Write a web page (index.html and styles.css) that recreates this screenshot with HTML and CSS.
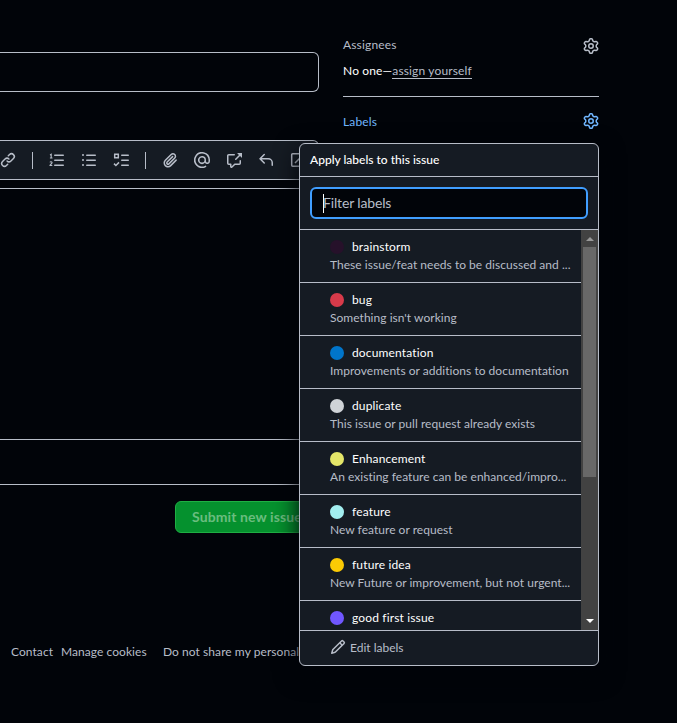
FILE: index.html
```html
<!DOCTYPE html>
<html lang="en">
<head>
<meta charset="utf-8">
<title>New issue</title>
<link rel="stylesheet" href="styles.css">
</head>
<body>
<svg class="sprite" aria-hidden="true">
  <symbol id="gear" viewBox="0 0 16 16"><path d="M8 0a8.2 8.2 0 0 1 .701.031C9.444.095 9.99.645 10.16 1.29l.288 1.107c.018.066.079.158.212.224.231.114.454.243.668.386.123.082.233.09.299.071l1.103-.303c.644-.176 1.392.021 1.82.63.27.385.506.792.704 1.218.315.675.111 1.422-.364 1.891l-.814.806c-.049.048-.098.147-.088.294.016.257.016.515 0 .772-.01.147.038.246.088.294l.814.806c.475.469.679 1.216.364 1.891a7.977 7.977 0 0 1-.704 1.217c-.428.61-1.176.807-1.82.63l-1.102-.302c-.067-.019-.177-.011-.3.071a5.909 5.909 0 0 1-.668.386c-.133.066-.194.158-.211.224l-.29 1.106c-.168.646-.715 1.196-1.458 1.26a8.006 8.006 0 0 1-1.402 0c-.743-.064-1.289-.614-1.458-1.26l-.289-1.106c-.018-.066-.079-.158-.212-.224a5.738 5.738 0 0 1-.668-.386c-.123-.082-.233-.09-.299-.071l-1.103.303c-.644.176-1.392-.021-1.82-.63a8.12 8.12 0 0 1-.704-1.218c-.315-.675-.111-1.422.363-1.891l.815-.806c.05-.048.098-.147.088-.294a6.214 6.214 0 0 1 0-.772c.01-.147-.038-.246-.088-.294l-.815-.806C.635 6.045.431 5.298.746 4.623a7.92 7.92 0 0 1 .704-1.217c.428-.61 1.176-.807 1.82-.63l1.102.302c.067.019.177.011.3-.071.214-.143.437-.272.668-.386.133-.066.194-.158.211-.224l.29-1.106C6.009.645 6.556.095 7.299.03 7.53.01 7.764 0 8 0Zm-.571 1.525c-.036.003-.108.036-.137.146l-.289 1.105c-.147.561-.549.967-.998 1.189-.173.086-.34.183-.5.29-.417.278-.97.423-1.529.27l-1.103-.303c-.109-.03-.175.016-.195.045-.22.312-.412.644-.573.99-.014.031-.021.11.059.19l.815.806c.411.406.562.957.53 1.456a4.709 4.709 0 0 0 0 .582c.032.499-.119 1.05-.53 1.456l-.815.806c-.081.08-.073.159-.059.19.162.346.353.677.573.989.02.03.085.076.195.046l1.102-.303c.56-.153 1.113-.008 1.53.27.161.107.328.204.501.29.447.222.85.629.997 1.189l.289 1.105c.029.109.101.143.137.146a6.6 6.6 0 0 0 1.142 0c.036-.003.108-.036.137-.146l.289-1.105c.147-.561.549-.967.998-1.189.173-.086.34-.183.5-.29.417-.278.97-.423 1.529-.27l1.103.303c.109.029.175-.016.195-.045.22-.313.411-.644.573-.99.014-.031.021-.11-.059-.19l-.815-.806c-.411-.406-.562-.957-.53-1.456a4.709 4.709 0 0 0 0-.582c-.032-.499.119-1.05.53-1.456l.815-.806c.081-.08.073-.159.059-.19a6.464 6.464 0 0 0-.573-.989c-.02-.03-.085-.076-.195-.046l-1.102.303c-.56.153-1.113.008-1.53-.27a4.44 4.44 0 0 0-.501-.29c-.447-.222-.85-.629-.997-1.189l-.289-1.105c-.029-.11-.101-.143-.137-.146a6.6 6.6 0 0 0-1.142 0ZM11 8a3 3 0 1 1-6 0 3 3 0 0 1 6 0ZM9.5 8a1.5 1.5 0 1 0-3.001.001A1.5 1.5 0 0 0 9.5 8Z"/></symbol>
</svg>

<div class="page">
  <main class="editor">
    <div class="title-field"></div>
    <div class="toolbar">
      <svg class="icon" viewBox="0 0 16 16"><path d="m7.775 3.275 1.25-1.25a3.5 3.5 0 1 1 4.95 4.95l-2.5 2.5a3.5 3.5 0 0 1-4.95 0 .751.751 0 0 1 .018-1.042.751.751 0 0 1 1.042-.018 1.998 1.998 0 0 0 2.83 0l2.5-2.5a2.002 2.002 0 0 0-2.83-2.83l-1.25 1.25a.751.751 0 0 1-1.042-.018.751.751 0 0 1-.018-1.042Zm-4.69 9.64a1.998 1.998 0 0 0 2.83 0l1.25-1.25a.751.751 0 0 1 1.042.018.751.751 0 0 1 .018 1.042l-1.25 1.25a3.5 3.5 0 1 1-4.95-4.95l2.5-2.5a3.5 3.5 0 0 1 4.95 0 .751.751 0 0 1-.018 1.042.751.751 0 0 1-1.042.018 1.998 1.998 0 0 0-2.83 0l-2.5 2.5a1.998 1.998 0 0 0 0 2.83Z"/></svg>
      <span class="divider"></span>
      <svg class="icon" viewBox="0 0 16 16"><path d="M5.75 2.5h8.5a.75.75 0 0 1 0 1.5h-8.5a.75.75 0 0 1 0-1.5Zm0 5h8.5a.75.75 0 0 1 0 1.5h-8.5a.75.75 0 0 1 0-1.5Zm0 5h8.5a.75.75 0 0 1 0 1.5h-8.5a.75.75 0 0 1 0-1.5Z"/><path class="line" d="M1 2.9 2.2 2.2V6M.9 6h2.6M1 10.4c.3-1 2.2-.9 2.1.3C3 11.7 1.2 12.3 1 13.5h2.3"/></svg>
      <svg class="icon" viewBox="0 0 16 16"><path d="M5.75 2.5h8.5a.75.75 0 0 1 0 1.5h-8.5a.75.75 0 0 1 0-1.5Zm0 5h8.5a.75.75 0 0 1 0 1.5h-8.5a.75.75 0 0 1 0-1.5Zm0 5h8.5a.75.75 0 0 1 0 1.5h-8.5a.75.75 0 0 1 0-1.5ZM2 14a1 1 0 1 1 0-2 1 1 0 0 1 0 2Zm1-6a1 1 0 1 1-2 0 1 1 0 0 1 2 0ZM2 4a1 1 0 1 1 0-2 1 1 0 0 1 0 2Z"/></svg>
      <svg class="icon" viewBox="0 0 16 16"><path d="M8.75 2.5h6.5a.75.75 0 0 1 0 1.5h-6.5a.75.75 0 0 1 0-1.5Zm0 5h6.5a.75.75 0 0 1 0 1.5h-6.5a.75.75 0 0 1 0-1.5Zm0 5h6.5a.75.75 0 0 1 0 1.5h-6.5a.75.75 0 0 1 0-1.5Z"/><path class="check" d="M1.7 2.2h3.6v3.6H1.7zM1 11.6l1.9 1.9L6 10.4"/></svg>
      <span class="divider"></span>
      <svg class="icon" viewBox="0 0 16 16"><path d="M12.212 3.02a1.753 1.753 0 0 0-2.478.003l-5.83 5.83a3.007 3.007 0 0 0-.88 2.127c0 .795.315 1.551.88 2.116.567.567 1.333.89 2.126.89.79 0 1.548-.321 2.116-.89l5.48-5.48a.75.75 0 0 1 1.061 1.06l-5.48 5.48a4.492 4.492 0 0 1-3.177 1.33c-1.2 0-2.345-.487-3.187-1.33a4.483 4.483 0 0 1-1.32-3.177c0-1.195.475-2.341 1.32-3.186l5.83-5.83a3.25 3.25 0 0 1 5.553 2.297c0 .863-.343 1.691-.953 2.301L7.439 12.39c-.375.377-.884.59-1.416.593a1.998 1.998 0 0 1-1.412-.593 1.992 1.992 0 0 1 0-2.828l5.48-5.48a.751.751 0 0 1 1.042.018.751.751 0 0 1 .018 1.042l-5.48 5.48a.492.492 0 0 0 0 .707.499.499 0 0 0 .352.154.51.51 0 0 0 .356-.154l5.833-5.827a1.755 1.755 0 0 0 0-2.481Z"/></svg>
      <svg class="icon" viewBox="0 0 16 16"><path d="M4.75 2.37a6.501 6.501 0 0 0 6.5 11.26.75.75 0 0 1 .75 1.298A7.999 7.999 0 0 1 .989 4.148 8 8 0 0 1 16 7.75v1.5a2.75 2.75 0 0 1-5.072 1.475 3.999 3.999 0 0 1-6.65-4.19A4 4 0 0 1 12 8v1.25a1.25 1.25 0 0 0 2.5 0V7.867a6.5 6.5 0 0 0-9.75-5.496ZM10.5 8a2.5 2.5 0 1 0-5 0 2.5 2.5 0 0 0 5 0Z"/></svg>
      <svg class="icon" viewBox="0 0 16 16"><path d="M2.75 3.5a.25.25 0 0 0-.25.25v7.5c0 .138.112.25.25.25h2a.75.75 0 0 1 .75.75v2.19l2.72-2.72a.749.749 0 0 1 .53-.22h4.5a.25.25 0 0 0 .25-.25v-2.5a.75.75 0 0 1 1.5 0v2.5A1.75 1.75 0 0 1 13.25 13H9.06l-2.573 2.573A1.458 1.458 0 0 1 4 14.543V13H2.75A1.75 1.75 0 0 1 1 11.25v-7.5C1 2.784 1.784 2 2.75 2h5.5a.75.75 0 0 1 0 1.5ZM16 1.25v4.146a.25.25 0 0 1-.427.177L14.03 4.03l-3.75 3.75a.749.749 0 0 1-1.275-.326.749.749 0 0 1 .215-.734l3.75-3.75-1.543-1.543A.25.25 0 0 1 11.604 1h4.146a.25.25 0 0 1 .25.25Z"/></svg>
      <svg class="icon" viewBox="0 0 16 16"><path d="M6.78 1.97a.75.75 0 0 1 0 1.06L3.81 6h6.44A4.75 4.75 0 0 1 15 10.75v2.5a.75.75 0 0 1-1.5 0v-2.5a3.25 3.25 0 0 0-3.25-3.25H3.81l2.97 2.97a.749.749 0 0 1-.326 1.275.749.749 0 0 1-.734-.215L1.47 7.28a.75.75 0 0 1 0-1.06l4.25-4.25a.75.75 0 0 1 1.06 0Z"/></svg>
      <svg class="icon" viewBox="0 0 16 16"><path class="box" d="M2.7 1.75h10.6a1 1 0 0 1 1 1v10.6a1 1 0 0 1-1 1H2.7a1 1 0 0 1-1-1V2.75a1 1 0 0 1 1-1ZM5 11l6-6"/></svg>
    </div>
    <div class="textarea"></div>
    <div class="attach"></div>
    <div class="submit">Submit new issue</div>
    <footer class="footer"><span class="contact">Contact</span><span class="cookies">Manage cookies</span><span class="privacy">Do not share my personal</span></footer>
  </main>

  <aside class="sidebar">
    <section class="assignees">
      <div class="heading"><span>Assignees</span><svg class="icon"><use href="#gear"/></svg></div>
      <div class="value">No one—<span class="self">assign yourself</span></div>
    </section>
    <section class="labels">
      <div class="heading active"><span>Labels</span><svg class="icon"><use href="#gear"/></svg></div>
      <div class="menu">
        <div class="menu-title"><span>Apply labels to this issue</span></div>
        <div class="filter"><div class="filter-input"><i class="caret"></i><span>Filter labels</span></div></div>
        <div class="scroller">
          <ul class="list">
            <li><div class="name"><i class="dot brainstorm"></i>brainstorm</div><p>These issue/feat needs to be discussed and ...</p></li>
            <li><div class="name"><i class="dot bug"></i>bug</div><p>Something isn't working</p></li>
            <li><div class="name"><i class="dot documentation"></i>documentation</div><p>Improvements or additions to documentation</p></li>
            <li><div class="name"><i class="dot duplicate"></i>duplicate</div><p>This issue or pull request already exists</p></li>
            <li><div class="name"><i class="dot enhancement"></i>Enhancement</div><p>An existing feature can be enhanced/impro...</p></li>
            <li><div class="name"><i class="dot feature"></i>feature</div><p>New feature or request</p></li>
            <li><div class="name"><i class="dot future"></i>future idea</div><p>New Future or improvement, but not urgent...</p></li>
            <li><div class="name"><i class="dot first"></i>good first issue</div></li>
          </ul>
          <div class="scrollbar"><i class="up"></i><i class="thumb"></i><i class="down"></i></div>
        </div>
        <div class="edit"><svg class="icon" viewBox="0 0 16 16"><path d="M11.013 1.427a1.75 1.75 0 0 1 2.474 0l1.086 1.086a1.75 1.75 0 0 1 0 2.474l-8.61 8.61c-.21.21-.47.364-.756.445l-3.251.93a.75.75 0 0 1-.927-.928l.929-3.25c.081-.286.235-.547.445-.758l8.61-8.61Zm.176 4.823L9.75 4.81l-6.286 6.287a.253.253 0 0 0-.064.108l-.558 1.953 1.953-.558a.253.253 0 0 0 .108-.064Zm1.238-3.763a.25.25 0 0 0-.354 0L10.811 3.75l1.439 1.44 1.263-1.263a.25.25 0 0 0 0-.354Z"/></svg><span>Edit labels</span></div>
      </div>
    </section>
  </aside>
</div>
</body>
</html>
```
FILE: styles.css
```css
* { box-sizing: border-box; }
body {
  margin: 0;
  height: 723px;
  overflow: hidden;
  background: #010409;
  color: #b7bdc8;
  font: 12px/18px Lato, "Noto Sans", sans-serif;
  letter-spacing: 0.15px;
}
.sprite { position: absolute; width: 0; height: 0; }
.icon { display: block; width: 16px; height: 16px; flex: none; fill: currentColor; }
.icon .line { fill: none; stroke: currentColor; stroke-width: 1.1; }
.icon .check, .icon .box { fill: none; stroke: currentColor; stroke-width: 1.5; }
.page { display: flex; gap: 24px; width: 599px; height: 723px; }

.editor { display: flex; flex-direction: column; width: 319px; padding-top: 52px; }
.title-field { height: 40px; border: 1px solid #b7bdc8; border-left: 0; border-radius: 0 6px 6px 0; }
.toolbar {
  display: flex;
  align-items: center;
  gap: 16px;
  height: 40px;
  margin-top: 48px;
  overflow: hidden;
  background: #151b23;
  border: 1px solid #b7bdc8;
  border-left: 0;
  border-radius: 0 6px 0 0;
}
.divider { flex: none; width: 1px; height: 17px; background: #b7bdc8; }
.textarea { height: 252px; margin-top: 8px; border: 1px solid #b7bdc8; border-width: 1px 0; }
.attach { height: 45px; border-bottom: 1px solid #b7bdc8; }
.submit {
  align-self: flex-end;
  width: 144px;
  height: 32px;
  margin-top: 16px;
  padding-left: 16px;
  font-size: 14px;
  font-weight: 700;
  letter-spacing: 0.1px;
  line-height: 30px;
  white-space: nowrap;
  color: #6abd7f;
  background: #05912e;
  border: 1px solid #1faf44;
  border-radius: 6px;
}
.footer { display: flex; margin-top: 110px; padding-left: 11px; white-space: nowrap; letter-spacing: 0.06px; }
.contact { width: 50px; }
.cookies { width: 102px; }

.sidebar { width: 256px; padding-top: 36px; }
.heading { display: flex; justify-content: space-between; align-items: center; height: 20px; }
.heading span { padding-bottom: 2px; }
.active { color: #71b7ff; }
.active span { padding: 2px 0 0; }
.assignees { height: 61px; border-bottom: 1px solid #b7bdc8; }
.value { margin-top: 6px; color: #fff; }
.self { display: inline-block; height: 17px; color: #b7bdc8; border-bottom: 1px solid #b7bdc8; }
.labels { position: relative; padding-top: 14px; }

.menu {
  position: absolute;
  top: 46px;
  right: 0;
  width: 300px;
  height: 523px;
  overflow: hidden;
  background: #151b23;
  border: 1px solid #b7bdc8;
  border-radius: 6px;
  box-shadow: 0 8px 24px #010409;
}
.menu-title { height: 33px; padding: 7px 10px; color: #fff; font-weight: 500; letter-spacing: 0; border-bottom: 1px solid #b7bdc8; }
.filter { height: 53px; padding: 10px; border-bottom: 1px solid #b7bdc8; }
.filter-input { display: flex; align-items: center; height: 32px; padding-left: 11px; font-size: 14px; letter-spacing: -0.15px; background: #010409; border: 2px solid #409eff; border-radius: 6px; }
.caret { width: 1px; height: 19px; margin-right: -1px; background: #fff; }
.scroller { display: flex; height: 400px; overflow: hidden; }
.list { flex: none; width: 281px; margin: 0; padding: 0; list-style: none; }
.list li { height: 53px; padding: 8px 0 8px 30px; border-bottom: 1px solid #b7bdc8; }
.list p { margin: 0; white-space: nowrap; letter-spacing: 0.03px; }
.name { display: flex; align-items: center; color: #fff; }
.dot { width: 14px; height: 14px; margin-right: 8px; border-radius: 50%; }
.brainstorm { background: #26112a; }
.bug { background: #d73a4a; }
.documentation { background: #0075ca; }
.duplicate { background: #cfd3d7; }
.enhancement { background: #e4e669; }
.feature { background: #a2eeef; }
.future { background: #fbca04; }
.first { background: #7057ff; }
.scrollbar { display: flex; flex-direction: column; align-items: center; width: 17px; background: #424242; }
.up { margin: 7px 0 6px; border: 4px solid transparent; border-top: 0; border-bottom-color: #989898; }
.thumb { width: 13px; height: 230px; background: #686868; }
.down { margin-top: auto; margin-bottom: 7px; border: 4px solid transparent; border-bottom: 0; border-top-color: #fff; }
.edit { display: flex; gap: 4px; height: 35px; padding: 8px 0 0 30px; border-top: 1px solid #b7bdc8; letter-spacing: 0; }
```
